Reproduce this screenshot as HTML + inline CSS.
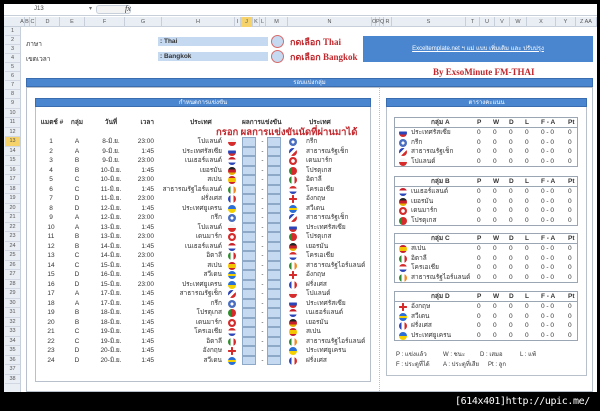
<!DOCTYPE html>
<html><head><meta charset="utf-8">
<style>
*{margin:0;padding:0;box-sizing:border-box}
body{width:600px;height:411px;background:#000;position:relative;overflow:hidden;font-family:"Liberation Sans","DejaVu Sans",sans-serif;font-size:6.5px;color:#333}
.a{position:absolute}
#sheet{left:4px;top:4px;width:593px;height:388px;background:#fff;overflow:hidden}
.rn{position:absolute;left:1px;width:15px;text-align:center;font-size:5.5px;color:#555;background:#e9eef5;border-bottom:1px solid #d0d7e2}
.ch{position:absolute;top:13px;height:10px;font-size:5.5px;color:#555;text-align:center;line-height:10px;border-right:1px solid #c7cfda}
.r{position:absolute;left:0;height:9.5px;line-height:9.5px;width:593px}
.r i{position:absolute;font-style:normal;white-space:nowrap}
.n{left:38px;width:18px;text-align:center}
.g{left:66px;width:14px;text-align:center}
.d{left:92px;width:30px;text-align:center}
.t{left:124px;width:26px;text-align:right}
.c1{right:375px;text-align:right}
.c2{left:302px}
.f{position:absolute;width:8px;height:8px;border-radius:50%;top:1px}
.f1{left:224px}.f2{left:285px}
.bx{position:absolute;top:0;width:14px;height:9.5px;background:#c5d9f1;border:1px solid #8ea9c8}
.b1{left:238px}.b2{left:263px}
.dash{left:254px;width:9px;text-align:center}
.pl{background:linear-gradient(#f5f5f5 50%,#d52b2b 50%)}
.gr{background:radial-gradient(circle at 50% 50%,#fff 25%,#4a6fc0 30%)}
.ru{background:linear-gradient(#fff 33%,#2b45b8 33% 66%,#d52b2b 66%)}
.cz{background:linear-gradient(135deg,#2b45b8 35%,#fff 35% 60%,#d52b2b 60%)}
.nl{background:linear-gradient(#c8202a 33%,#fff 33% 66%,#2b45b8 66%)}
.dk{background:radial-gradient(circle,#fff 30%,#d52b2b 35%)}
.de{background:linear-gradient(#222 33%,#c8202a 33% 66%,#e8b000 66%)}
.pt{background:linear-gradient(90deg,#2e8b2e 40%,#d52b2b 40%)}
.es{background:linear-gradient(#c8202a 25%,#f5c400 25% 75%,#c8202a 75%)}
.it{background:linear-gradient(90deg,#2e8b2e 33%,#fff 33% 66%,#d52b2b 66%)}
.ie{background:linear-gradient(90deg,#2e8b2e 33%,#fff 33% 66%,#f08a24 66%)}
.hr{background:linear-gradient(#d52b2b 33%,#fff 33% 66%,#2b45b8 66%)}
.fr{background:linear-gradient(90deg,#2b45b8 33%,#fff 33% 66%,#d52b2b 66%)}
.en{background:linear-gradient(90deg,transparent 40%,#d52b2b 40% 60%,transparent 60%),linear-gradient(#fff 40%,#d52b2b 40% 60%,#fff 60%)}
.ua{background:linear-gradient(#2b6fd6 50%,#f5d000 50%)}
.se{background:linear-gradient(#2b6fd6 40%,#f5d000 40% 60%,#2b6fd6 60%)}
.grp{position:absolute;left:390px;width:184px;border:1px solid #9aa6b4;background:#fff}
.grp .row{position:relative;height:9.5px;line-height:9.5px}
.grp .hd{border-bottom:1px solid #9aa6b4;font-weight:bold;color:#333;height:10px}
.grp i{position:absolute;font-style:normal;white-space:nowrap}
.grp .nm{left:16px}.grp .fl{position:absolute;left:4px;top:1px;width:8px;height:8px;border-radius:50%}
.p{left:82px}.w{left:98px}.dd{left:114px}.l{left:130px}.fa{left:146px}.pt2{left:173px}
.hdr{position:absolute;height:9px;background:#4a86d0;color:#fff;font-size:6px;text-align:center;line-height:9px;border:1px solid #3a6db0}
</style></head><body>
<div id="sheet" class="a">
<div class="a" style="left:0;top:0;width:593px;height:12px;background:#fff;border-bottom:1px solid #c7cfda"></div>
<div class="a" style="left:30px;top:2px;font-size:6px;color:#444">J13</div>
<div class="a" style="left:85px;top:1px;font-size:6px;color:#666">▾</div>
<div class="a" style="left:92px;top:1px;width:35px;height:9px;border:1px solid #c7cfda;border-radius:3px;background:#f3f3f3"></div>
<div class="a" style="left:121px;top:0px;font-size:8px;font-style:italic;font-family:'Liberation Serif',serif;color:#333">fx</div>
<div class="a" style="left:0;top:13px;width:593px;height:10px;background:#e9eef5;border-bottom:1px solid #c7cfda"></div>
<div class="ch" style="left:16px;width:5px">A</div><div class="ch" style="left:21px;width:5px">B</div><div class="ch" style="left:26px;width:6px">C</div><div class="ch" style="left:32px;width:24px">D</div><div class="ch" style="left:56px;width:25px">E</div><div class="ch" style="left:81px;width:40px">F</div><div class="ch" style="left:121px;width:37px">G</div><div class="ch" style="left:158px;width:73px">H</div><div class="ch" style="left:231px;width:6px">I</div><div class="ch" style="left:237px;width:12px;background:#f5d36a">J</div><div class="ch" style="left:249px;width:7px">K</div><div class="ch" style="left:256px;width:6px">L</div><div class="ch" style="left:262px;width:22px">M</div><div class="ch" style="left:284px;width:84px">N</div><div class="ch" style="left:368px;width:4px">O</div><div class="ch" style="left:372px;width:4px">P</div><div class="ch" style="left:376px;width:4px">Q</div><div class="ch" style="left:380px;width:8px">R</div><div class="ch" style="left:388px;width:74px">S</div><div class="ch" style="left:462px;width:14px">T</div><div class="ch" style="left:476px;width:15px">U</div><div class="ch" style="left:491px;width:15px">V</div><div class="ch" style="left:506px;width:17px">W</div><div class="ch" style="left:523px;width:29px">X</div><div class="ch" style="left:552px;width:20px">Y</div><div class="ch" style="left:572px;width:21px">Z AA</div>
<div class="a" style="left:0;top:23px;width:17px;height:370px;background:#e9eef5;border-right:1px solid #c7cfda"></div>
<div class="rn" style="top:23px;height:9px;line-height:9px">1</div><div class="rn" style="top:32px;height:9px;line-height:9px">2</div><div class="rn" style="top:41px;height:9px;line-height:9px">3</div><div class="rn" style="top:50px;height:9px;line-height:9px">4</div><div class="rn" style="top:59px;height:9px;line-height:9px">5</div><div class="rn" style="top:68px;height:9px;line-height:9px">6</div><div class="rn" style="top:77px;height:9px;line-height:9px">7</div><div class="rn" style="top:86px;height:9px;line-height:9px">8</div>
<div class="rn" style="top:95px;height:9.5px;line-height:9.5px">9</div><div class="rn" style="top:104.5px;height:9.5px;line-height:9.5px">10</div><div class="rn" style="top:114px;height:9.5px;line-height:9.5px">11</div><div class="rn" style="top:123.5px;height:9.5px;line-height:9.5px">12</div><div class="rn" style="top:133px;height:9.5px;line-height:9.5px;background:#f5d36a">13</div><div class="rn" style="top:142.5px;height:9.5px;line-height:9.5px">14</div><div class="rn" style="top:152px;height:9.5px;line-height:9.5px">15</div><div class="rn" style="top:161.5px;height:9.5px;line-height:9.5px">16</div><div class="rn" style="top:171px;height:9.5px;line-height:9.5px">17</div><div class="rn" style="top:180.5px;height:9.5px;line-height:9.5px">18</div><div class="rn" style="top:190px;height:9.5px;line-height:9.5px">19</div><div class="rn" style="top:199.5px;height:9.5px;line-height:9.5px">20</div><div class="rn" style="top:209px;height:9.5px;line-height:9.5px">21</div><div class="rn" style="top:218.5px;height:9.5px;line-height:9.5px">22</div><div class="rn" style="top:228px;height:9.5px;line-height:9.5px">23</div><div class="rn" style="top:237.5px;height:9.5px;line-height:9.5px">24</div><div class="rn" style="top:247px;height:9.5px;line-height:9.5px">25</div><div class="rn" style="top:256.5px;height:9.5px;line-height:9.5px">26</div><div class="rn" style="top:266px;height:9.5px;line-height:9.5px">27</div><div class="rn" style="top:275.5px;height:9.5px;line-height:9.5px">28</div><div class="rn" style="top:285px;height:9.5px;line-height:9.5px">29</div><div class="rn" style="top:294.5px;height:9.5px;line-height:9.5px">30</div><div class="rn" style="top:304px;height:9.5px;line-height:9.5px">31</div><div class="rn" style="top:313.5px;height:9.5px;line-height:9.5px">32</div><div class="rn" style="top:323px;height:9.5px;line-height:9.5px">33</div><div class="rn" style="top:332.5px;height:9.5px;line-height:9.5px">34</div><div class="rn" style="top:342px;height:9.5px;line-height:9.5px">35</div><div class="rn" style="top:351.5px;height:9.5px;line-height:9.5px">36</div><div class="rn" style="top:361px;height:9.5px;line-height:9.5px">37</div><div class="rn" style="top:370.5px;height:9.5px;line-height:9.5px">38</div>

<div class="a" style="left:22px;top:35px;font-size:6.5px">ภาษา</div>
<div class="a" style="left:22px;top:50px;font-size:6.5px">เขตเวลา</div>
<div class="a" style="left:154px;top:33px;width:110px;height:9px;background:#c5d9f1;font-size:6.5px;font-weight:bold;line-height:9px;padding-left:2px">: Thai</div>
<div class="a" style="left:154px;top:48px;width:110px;height:9px;background:#c5d9f1;font-size:6.5px;font-weight:bold;line-height:9px;padding-left:2px">: Bangkok</div>
<div class="a" style="left:267px;top:31px;width:13px;height:13px;border-radius:50%;border:1px solid #d86a6a;background:#c5d9f1"></div>
<div class="a" style="left:267px;top:46px;width:13px;height:13px;border-radius:50%;border:1px solid #d86a6a;background:#c5d9f1"></div>
<div class="a" style="left:286px;top:31px;font-size:9px;font-weight:bold;color:#c0282d;font-family:'Liberation Serif',serif">กดเลือก Thai</div>
<div class="a" style="left:286px;top:46px;font-size:9px;font-weight:bold;color:#c0282d;font-family:'Liberation Serif',serif">กดเลือก Bangkok</div>
<div class="a" style="left:359px;top:32px;width:230px;height:26px;background:#4a86d0;color:#fff;font-size:6px;text-align:center;line-height:26px;text-decoration:underline">Exceltemplate.net ฯ แม่ แบบ เพิ่มเติม และ ปรับปรุง</div>
<div class="a" style="left:429px;top:63px;font-size:9px;font-weight:bold;color:#c0282d;font-family:'Liberation Serif',serif">By ExsoMinute FM-THAI</div>

<div class="a" style="left:22px;top:83px;width:567px;height:305px;border:1px solid #b8c0cc"></div>
<div class="hdr" style="left:22px;top:74px;width:567px">รอบแบ่งกลุ่ม</div>
<div class="a" style="left:375px;top:84px;width:0;height:303px;border-left:1px dotted #b8c0cc"></div>
<div class="a" style="left:31px;top:94px;width:336px;height:284px;border:1px solid #b8c0cc"></div>
<div class="hdr" style="left:31px;top:94px;width:336px">กำหนดการแข่งขัน</div>
<div class="a" style="left:382px;top:94px;width:201px;height:278px;border:1px solid #b8c0cc"></div>
<div class="hdr" style="left:382px;top:94px;width:201px">ตารางคะแนน</div>

<div class="r" style="top:114px;font-weight:bold"><i class="n" style="left:36px;width:24px">แมตช์ #</i><i class="g">กลุ่ม</i><i class="d">วันที่</i><i class="t">เวลา</i><i style="left:186px">ประเทศ</i><i style="left:238px">ผลการแข่งขัน</i><i style="left:305px">ประเทศ</i></div>
<div class="a" style="left:212px;top:121px;font-size:9.5px;font-weight:bold;color:#c0282d;font-family:'Liberation Serif',serif;white-space:nowrap">กรอก ผลการแข่งขันนัดที่ผ่านมาได้</div>

<div class="r" style="top:133px"><i class="n">1</i><i class="g">A</i><i class="d">8-มิ.ย.</i><i class="t">23:00</i><i class="c1">โปแลนด์</i><b class="f f1 pl"></b><b class="bx b1"></b><i class="dash">-</i><b class="bx b2"></b><b class="f f2 gr"></b><i class="c2">กรีก</i></div>
<div class="r" style="top:142.5px"><i class="n">2</i><i class="g">A</i><i class="d">9-มิ.ย.</i><i class="t">1:45</i><i class="c1">ประเทศรัสเซีย</i><b class="f f1 ru"></b><b class="bx b1"></b><i class="dash">-</i><b class="bx b2"></b><b class="f f2 cz"></b><i class="c2">สาธารณรัฐเช็ก</i></div>
<div class="r" style="top:152px"><i class="n">3</i><i class="g">B</i><i class="d">9-มิ.ย.</i><i class="t">23:00</i><i class="c1">เนเธอร์แลนด์</i><b class="f f1 nl"></b><b class="bx b1"></b><i class="dash">-</i><b class="bx b2"></b><b class="f f2 dk"></b><i class="c2">เดนมาร์ก</i></div>
<div class="r" style="top:161.5px"><i class="n">4</i><i class="g">B</i><i class="d">10-มิ.ย.</i><i class="t">1:45</i><i class="c1">เยอรมัน</i><b class="f f1 de"></b><b class="bx b1"></b><i class="dash">-</i><b class="bx b2"></b><b class="f f2 pt"></b><i class="c2">โปรตุเกส</i></div>
<div class="r" style="top:171px"><i class="n">5</i><i class="g">C</i><i class="d">10-มิ.ย.</i><i class="t">23:00</i><i class="c1">สเปน</i><b class="f f1 es"></b><b class="bx b1"></b><i class="dash">-</i><b class="bx b2"></b><b class="f f2 it"></b><i class="c2">อิตาลี</i></div>
<div class="r" style="top:180.5px"><i class="n">6</i><i class="g">C</i><i class="d">11-มิ.ย.</i><i class="t">1:45</i><i class="c1">สาธารณรัฐไอร์แลนด์</i><b class="f f1 ie"></b><b class="bx b1"></b><i class="dash">-</i><b class="bx b2"></b><b class="f f2 hr"></b><i class="c2">โครเอเชีย</i></div>
<div class="r" style="top:190px"><i class="n">7</i><i class="g">D</i><i class="d">11-มิ.ย.</i><i class="t">23:00</i><i class="c1">ฝรั่งเศส</i><b class="f f1 fr"></b><b class="bx b1"></b><i class="dash">-</i><b class="bx b2"></b><b class="f f2 en"></b><i class="c2">อังกฤษ</i></div>
<div class="r" style="top:199.5px"><i class="n">8</i><i class="g">D</i><i class="d">12-มิ.ย.</i><i class="t">1:45</i><i class="c1">ประเทศยูเครน</i><b class="f f1 ua"></b><b class="bx b1"></b><i class="dash">-</i><b class="bx b2"></b><b class="f f2 se"></b><i class="c2">สวีเดน</i></div>
<div class="r" style="top:209px"><i class="n">9</i><i class="g">A</i><i class="d">12-มิ.ย.</i><i class="t">23:00</i><i class="c1">กรีก</i><b class="f f1 gr"></b><b class="bx b1"></b><i class="dash">-</i><b class="bx b2"></b><b class="f f2 cz"></b><i class="c2">สาธารณรัฐเช็ก</i></div>
<div class="r" style="top:218.5px"><i class="n">10</i><i class="g">A</i><i class="d">13-มิ.ย.</i><i class="t">1:45</i><i class="c1">โปแลนด์</i><b class="f f1 pl"></b><b class="bx b1"></b><i class="dash">-</i><b class="bx b2"></b><b class="f f2 ru"></b><i class="c2">ประเทศรัสเซีย</i></div>
<div class="r" style="top:228px"><i class="n">11</i><i class="g">B</i><i class="d">13-มิ.ย.</i><i class="t">23:00</i><i class="c1">เดนมาร์ก</i><b class="f f1 dk"></b><b class="bx b1"></b><i class="dash">-</i><b class="bx b2"></b><b class="f f2 pt"></b><i class="c2">โปรตุเกส</i></div>
<div class="r" style="top:237.5px"><i class="n">12</i><i class="g">B</i><i class="d">14-มิ.ย.</i><i class="t">1:45</i><i class="c1">เนเธอร์แลนด์</i><b class="f f1 nl"></b><b class="bx b1"></b><i class="dash">-</i><b class="bx b2"></b><b class="f f2 de"></b><i class="c2">เยอรมัน</i></div>
<div class="r" style="top:247px"><i class="n">13</i><i class="g">C</i><i class="d">14-มิ.ย.</i><i class="t">23:00</i><i class="c1">อิตาลี</i><b class="f f1 it"></b><b class="bx b1"></b><i class="dash">-</i><b class="bx b2"></b><b class="f f2 hr"></b><i class="c2">โครเอเชีย</i></div>
<div class="r" style="top:256.5px"><i class="n">14</i><i class="g">C</i><i class="d">15-มิ.ย.</i><i class="t">1:45</i><i class="c1">สเปน</i><b class="f f1 es"></b><b class="bx b1"></b><i class="dash">-</i><b class="bx b2"></b><b class="f f2 ie"></b><i class="c2">สาธารณรัฐไอร์แลนด์</i></div>
<div class="r" style="top:266px"><i class="n">15</i><i class="g">D</i><i class="d">16-มิ.ย.</i><i class="t">1:45</i><i class="c1">สวีเดน</i><b class="f f1 se"></b><b class="bx b1"></b><i class="dash">-</i><b class="bx b2"></b><b class="f f2 en"></b><i class="c2">อังกฤษ</i></div>
<div class="r" style="top:275.5px"><i class="n">16</i><i class="g">D</i><i class="d">15-มิ.ย.</i><i class="t">23:00</i><i class="c1">ประเทศยูเครน</i><b class="f f1 ua"></b><b class="bx b1"></b><i class="dash">-</i><b class="bx b2"></b><b class="f f2 fr"></b><i class="c2">ฝรั่งเศส</i></div>
<div class="r" style="top:285px"><i class="n">17</i><i class="g">A</i><i class="d">17-มิ.ย.</i><i class="t">1:45</i><i class="c1">สาธารณรัฐเช็ก</i><b class="f f1 cz"></b><b class="bx b1"></b><i class="dash">-</i><b class="bx b2"></b><b class="f f2 pl"></b><i class="c2">โปแลนด์</i></div>
<div class="r" style="top:294.5px"><i class="n">18</i><i class="g">A</i><i class="d">17-มิ.ย.</i><i class="t">1:45</i><i class="c1">กรีก</i><b class="f f1 gr"></b><b class="bx b1"></b><i class="dash">-</i><b class="bx b2"></b><b class="f f2 ru"></b><i class="c2">ประเทศรัสเซีย</i></div>
<div class="r" style="top:304px"><i class="n">19</i><i class="g">B</i><i class="d">18-มิ.ย.</i><i class="t">1:45</i><i class="c1">โปรตุเกส</i><b class="f f1 pt"></b><b class="bx b1"></b><i class="dash">-</i><b class="bx b2"></b><b class="f f2 nl"></b><i class="c2">เนเธอร์แลนด์</i></div>
<div class="r" style="top:313.5px"><i class="n">20</i><i class="g">B</i><i class="d">18-มิ.ย.</i><i class="t">1:45</i><i class="c1">เดนมาร์ก</i><b class="f f1 dk"></b><b class="bx b1"></b><i class="dash">-</i><b class="bx b2"></b><b class="f f2 de"></b><i class="c2">เยอรมัน</i></div>
<div class="r" style="top:323px"><i class="n">21</i><i class="g">C</i><i class="d">19-มิ.ย.</i><i class="t">1:45</i><i class="c1">โครเอเชีย</i><b class="f f1 hr"></b><b class="bx b1"></b><i class="dash">-</i><b class="bx b2"></b><b class="f f2 es"></b><i class="c2">สเปน</i></div>
<div class="r" style="top:332.5px"><i class="n">22</i><i class="g">C</i><i class="d">19-มิ.ย.</i><i class="t">1:45</i><i class="c1">อิตาลี</i><b class="f f1 it"></b><b class="bx b1"></b><i class="dash">-</i><b class="bx b2"></b><b class="f f2 ie"></b><i class="c2">สาธารณรัฐไอร์แลนด์</i></div>
<div class="r" style="top:342px"><i class="n">23</i><i class="g">D</i><i class="d">20-มิ.ย.</i><i class="t">1:45</i><i class="c1">อังกฤษ</i><b class="f f1 en"></b><b class="bx b1"></b><i class="dash">-</i><b class="bx b2"></b><b class="f f2 ua"></b><i class="c2">ประเทศยูเครน</i></div>
<div class="r" style="top:351.5px"><i class="n">24</i><i class="g">D</i><i class="d">20-มิ.ย.</i><i class="t">1:45</i><i class="c1">สวีเดน</i><b class="f f1 se"></b><b class="bx b1"></b><i class="dash">-</i><b class="bx b2"></b><b class="f f2 fr"></b><i class="c2">ฝรั่งเศส</i></div>

<div class="grp" style="top:113px">
<div class="row hd"><i style="left:36px">กลุ่ม A</i><i class="p">P</i><i class="w">W</i><i class="dd">D</i><i class="l">L</i><i class="fa">F - A</i><i class="pt2">Pt</i></div>
<div class="row"><b class="fl ru"></b><i class="nm">ประเทศรัสเซีย</i><i class="p">0</i><i class="w">0</i><i class="dd">0</i><i class="l">0</i><i class="fa">0 - 0</i><i class="pt2">0</i></div>
<div class="row"><b class="fl gr"></b><i class="nm">กรีก</i><i class="p">0</i><i class="w">0</i><i class="dd">0</i><i class="l">0</i><i class="fa">0 - 0</i><i class="pt2">0</i></div>
<div class="row"><b class="fl cz"></b><i class="nm">สาธารณรัฐเช็ก</i><i class="p">0</i><i class="w">0</i><i class="dd">0</i><i class="l">0</i><i class="fa">0 - 0</i><i class="pt2">0</i></div>
<div class="row"><b class="fl pl"></b><i class="nm">โปแลนด์</i><i class="p">0</i><i class="w">0</i><i class="dd">0</i><i class="l">0</i><i class="fa">0 - 0</i><i class="pt2">0</i></div>
</div>
<div class="grp" style="top:172px">
<div class="row hd"><i style="left:36px">กลุ่ม B</i><i class="p">P</i><i class="w">W</i><i class="dd">D</i><i class="l">L</i><i class="fa">F - A</i><i class="pt2">Pt</i></div>
<div class="row"><b class="fl nl"></b><i class="nm">เนเธอร์แลนด์</i><i class="p">0</i><i class="w">0</i><i class="dd">0</i><i class="l">0</i><i class="fa">0 - 0</i><i class="pt2">0</i></div>
<div class="row"><b class="fl de"></b><i class="nm">เยอรมัน</i><i class="p">0</i><i class="w">0</i><i class="dd">0</i><i class="l">0</i><i class="fa">0 - 0</i><i class="pt2">0</i></div>
<div class="row"><b class="fl dk"></b><i class="nm">เดนมาร์ก</i><i class="p">0</i><i class="w">0</i><i class="dd">0</i><i class="l">0</i><i class="fa">0 - 0</i><i class="pt2">0</i></div>
<div class="row"><b class="fl pt"></b><i class="nm">โปรตุเกส</i><i class="p">0</i><i class="w">0</i><i class="dd">0</i><i class="l">0</i><i class="fa">0 - 0</i><i class="pt2">0</i></div>
</div>
<div class="grp" style="top:229px">
<div class="row hd"><i style="left:36px">กลุ่ม C</i><i class="p">P</i><i class="w">W</i><i class="dd">D</i><i class="l">L</i><i class="fa">F - A</i><i class="pt2">Pt</i></div>
<div class="row"><b class="fl es"></b><i class="nm">สเปน</i><i class="p">0</i><i class="w">0</i><i class="dd">0</i><i class="l">0</i><i class="fa">0 - 0</i><i class="pt2">0</i></div>
<div class="row"><b class="fl it"></b><i class="nm">อิตาลี</i><i class="p">0</i><i class="w">0</i><i class="dd">0</i><i class="l">0</i><i class="fa">0 - 0</i><i class="pt2">0</i></div>
<div class="row"><b class="fl hr"></b><i class="nm">โครเอเชีย</i><i class="p">0</i><i class="w">0</i><i class="dd">0</i><i class="l">0</i><i class="fa">0 - 0</i><i class="pt2">0</i></div>
<div class="row"><b class="fl ie"></b><i class="nm">สาธารณรัฐไอร์แลนด์</i><i class="p">0</i><i class="w">0</i><i class="dd">0</i><i class="l">0</i><i class="fa">0 - 0</i><i class="pt2">0</i></div>
</div>
<div class="grp" style="top:287px">
<div class="row hd"><i style="left:36px">กลุ่ม D</i><i class="p">P</i><i class="w">W</i><i class="dd">D</i><i class="l">L</i><i class="fa">F - A</i><i class="pt2">Pt</i></div>
<div class="row"><b class="fl en"></b><i class="nm">อังกฤษ</i><i class="p">0</i><i class="w">0</i><i class="dd">0</i><i class="l">0</i><i class="fa">0 - 0</i><i class="pt2">0</i></div>
<div class="row"><b class="fl se"></b><i class="nm">สวีเดน</i><i class="p">0</i><i class="w">0</i><i class="dd">0</i><i class="l">0</i><i class="fa">0 - 0</i><i class="pt2">0</i></div>
<div class="row"><b class="fl fr"></b><i class="nm">ฝรั่งเศส</i><i class="p">0</i><i class="w">0</i><i class="dd">0</i><i class="l">0</i><i class="fa">0 - 0</i><i class="pt2">0</i></div>
<div class="row"><b class="fl ua"></b><i class="nm">ประเทศยูเครน</i><i class="p">0</i><i class="w">0</i><i class="dd">0</i><i class="l">0</i><i class="fa">0 - 0</i><i class="pt2">0</i></div>
</div>
<div class="a" style="left:392px;top:345px;font-size:6px;white-space:nowrap">P : แข่งแล้ว</div>
<div class="a" style="left:439px;top:345px;font-size:6px;white-space:nowrap">W : ชนะ</div>
<div class="a" style="left:476px;top:345px;font-size:6px;white-space:nowrap">D : เสมอ</div>
<div class="a" style="left:516px;top:345px;font-size:6px;white-space:nowrap">L : แพ้</div>
<div class="a" style="left:392px;top:355px;font-size:6px;white-space:nowrap">F : ประตูที่ได้</div>
<div class="a" style="left:439px;top:355px;font-size:6px;white-space:nowrap">A : ประตูที่เสีย</div>
<div class="a" style="left:484px;top:355px;font-size:6px;white-space:nowrap">Pt : ลูก</div>
</div>
<div class="a" style="left:455px;top:396px;color:#fff;font-size:10px;font-family:'DejaVu Sans Mono','Liberation Mono',monospace;letter-spacing:-0.4px;white-space:nowrap">[614x401]http://upic.me/</div>
</body></html>
